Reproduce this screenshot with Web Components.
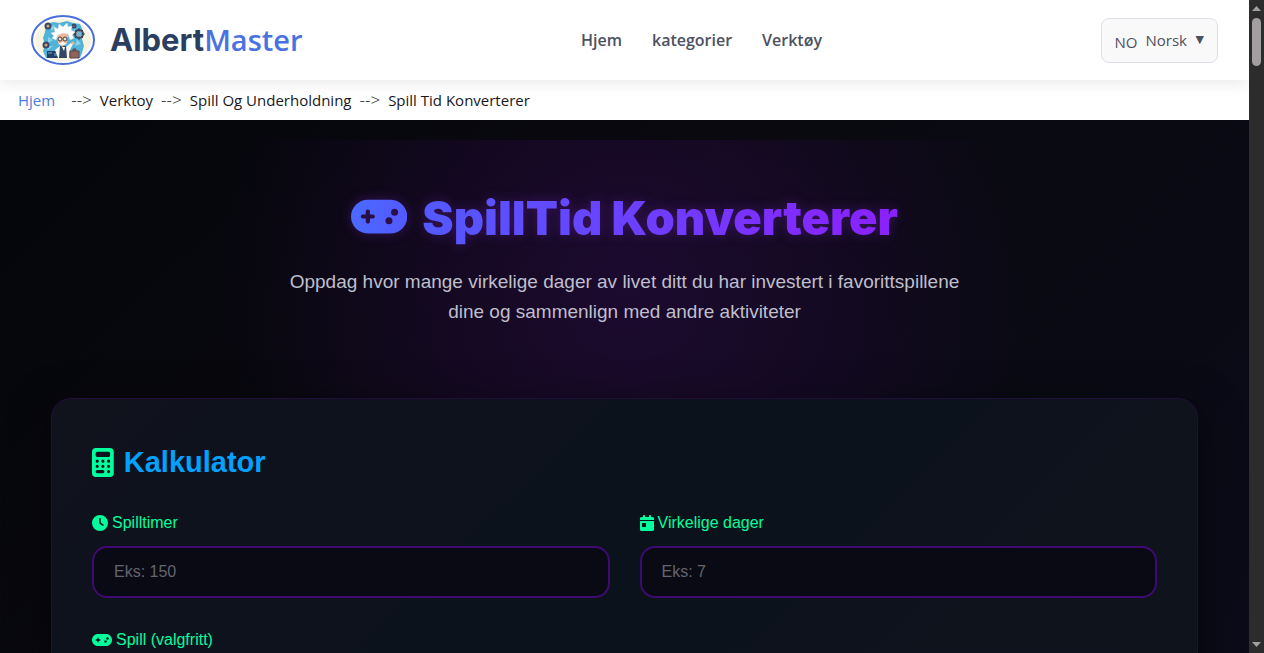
<!DOCTYPE html>
<html lang="no">
<head>
<meta charset="utf-8">
<meta name="viewport" content="width=device-width, initial-scale=1">
<title>SpillTid Konverterer - AlbertMaster</title>
<style>
  body {
    margin: 0;
    font-family: "Liberation Sans", Arial, sans-serif;
    background: #08080f;
  }
</style>
</head>
<body>
<app-shell>
  <site-header>
    <nav-link href="#hjem">Hjem</nav-link>
    <nav-link href="#kategorier">kategorier</nav-link>
    <nav-link href="#verktoy">Verktøy</nav-link>
  </site-header>
  <bread-crumbs></bread-crumbs>
  <tool-page>
    <hero-banner heading="SpillTid Konverterer">Oppdag hvor mange virkelige dager av livet ditt du har investert i favorittspillene dine og sammenlign med andre aktiviteter</hero-banner>
    <calc-card heading="Kalkulator">
      <form-field icon="clock" type="number" placeholder="Eks: 150">Spilltimer</form-field>
      <form-field icon="calendar" type="number" placeholder="Eks: 7">Virkelige dager</form-field>
      <form-field class="wide" icon="gamepad" type="text">Spill (valgfritt)</form-field>
    </calc-card>
  </tool-page>
</app-shell>

<script>
const icons = {
  gamepad: ["0 0 640 512", "M192 64C86 64 0 150 0 256S86 448 192 448l256 0c106 0 192-86 192-192s-86-192-192-192L192 64zM496 168a40 40 0 1 1 0 80 40 40 0 1 1 0-80zM392 304a40 40 0 1 1 80 0 40 40 0 1 1 -80 0zM168 200c0-13.3 10.7-24 24-24s24 10.7 24 24l0 32 32 0c13.3 0 24 10.7 24 24s-10.7 24-24 24l-32 0 0 32c0 13.3-10.7 24-24 24s-24-10.7-24-24l0-32-32 0c-13.3 0-24-10.7-24-24s10.7-24 24-24l32 0 0-32z"],
  calculator: ["0 0 384 512", "M64 0C28.7 0 0 28.7 0 64L0 448c0 35.3 28.7 64 64 64l256 0c35.3 0 64-28.7 64-64l0-384c0-35.3-28.7-64-64-64L64 0zM96 64l192 0c17.7 0 32 14.3 32 32l0 32c0 17.7-14.3 32-32 32L96 160c-17.7 0-32-14.3-32-32l0-32c0-17.7 14.3-32 32-32zM64 232a28 28 0 1 1 56 0 28 28 0 1 1 -56 0zM164 232a28 28 0 1 1 56 0 28 28 0 1 1 -56 0zM264 232a28 28 0 1 1 56 0 28 28 0 1 1 -56 0zM64 324a28 28 0 1 1 56 0 28 28 0 1 1 -56 0zM164 324a28 28 0 1 1 56 0 28 28 0 1 1 -56 0zM264 324a28 28 0 1 1 56 0 28 28 0 1 1 -56 0zM92 388l100 0a28 28 0 1 1 0 56l-100 0a28 28 0 1 1 0-56zM264 416a28 28 0 1 1 56 0 28 28 0 1 1 -56 0z"],
  clock: ["0 0 512 512", "M256 0a256 256 0 1 1 0 512A256 256 0 1 1 256 0zM232 120l0 136c0 8 4 15.5 10.7 20l96 64c11 7.4 25.9 4.4 33.3-6.7s4.4-25.9-6.7-33.3L280 243.2 280 120c0-13.3-10.7-24-24-24s-24 10.7-24 24z"],
  calendar: ["0 0 448 512", "M128 0c17.7 0 32 14.3 32 32l0 32 128 0 0-32c0-17.7 14.3-32 32-32s32 14.3 32 32l0 32 48 0c26.5 0 48 21.5 48 48l0 48L0 160l0-48C0 85.5 21.5 64 48 64l48 0 0-32c0-17.7 14.3-32 32-32zM0 192l448 0 0 272c0 26.5-21.5 48-48 48L48 512c-26.5 0-48-21.5-48-48L0 192zm80 64c-8.8 0-16 7.2-16 16l0 96c0 8.8 7.2 16 16 16l96 0c8.8 0 16-7.2 16-16l0-96c0-8.8-7.2-16-16-16l-96 0z"]
};

// height follows the font size of the parent, like an icon font
class FaIcon extends HTMLElement {
  connectedCallback() {
    const [box, path] = icons[this.getAttribute("name")];
    const fill = this.hasAttribute("gradient") ? "url(#title)" : "currentColor";
    this.attachShadow({ mode: "open" }).innerHTML = `
      <style>
        :host { display: inline-flex; }
        svg { display: block; height: 1em; }
      </style>
      <svg viewBox="${box}" aria-hidden="true">
        <defs>
          <linearGradient id="title">
            <stop offset="0" stop-color="#4a6aff"/>
            <stop offset="1" stop-color="#5359ff"/>
          </linearGradient>
        </defs>
        <path fill="${fill}" fill-rule="evenodd" d="${path}"/>
      </svg>
    `;
  }
}

class AppShell extends HTMLElement {
  connectedCallback() {
    this.attachShadow({ mode: "open" }).innerHTML = `
      <style>
        :host {
          display: grid;
          grid-template-columns: minmax(0, 1fr) 15px;
          height: 100vh;
        }
        main {
          display: flex;
          flex-direction: column;
          overflow-y: auto;
          scrollbar-width: none;
        }
      </style>
      <main><slot></slot></main>
      <scroll-rail></scroll-rail>
    `;
  }
}

class ScrollRail extends HTMLElement {
  connectedCallback() {
    this.attachShadow({ mode: "open" }).innerHTML = `
      <style>
        :host {
          display: flex;
          flex-direction: column;
          align-items: center;
          background: #2c2c2c;
        }
        svg { display: block; width: 15px; height: 18px; fill: #a39fa0; }
        .thumb { width: 9px; height: 48px; border-radius: 5px; background: #a39fa0; }
        .track { flex: 1; }
      </style>
      <svg viewBox="0 0 15 18"><path d="M7.500 6l4.500 5H3z"/></svg>
      <div class="thumb"></div>
      <div class="track"></div>
      <svg viewBox="0 0 15 18"><path d="M7.500 12l4.500-5H3z"/></svg>
    `;
  }
}

class SiteHeader extends HTMLElement {
  connectedCallback() {
    this.attachShadow({ mode: "open" }).innerHTML = `
      <style>
        :host {
          display: flex;
          flex: none;
          align-items: center;
          justify-content: space-between;
          box-sizing: border-box;
          height: 80px;
          padding: 0 31px;
          background: #fff;
          box-shadow: 0 2px 15px rgba(0, 0, 0, 0.1);
          position: relative;
          font-family: "Open Sans", sans-serif;
        }
        .brand {
          display: flex;
          align-items: center;
          gap: 15px;
          text-decoration: none;
          white-space: nowrap;
        }
        .name { font: 700 31px/44px Inter, sans-serif; color: #2a3f5f; }
        .name span { font: 600 29px/44px "Open Sans", sans-serif; color: #4a72e0; }
        nav { display: flex; gap: 30px; }
      </style>
      <a class="brand" href="#">
        <brand-logo></brand-logo>
        <div class="name">Albert<span>Master</span></div>
      </a>
      <nav><slot></slot></nav>
      <language-picker></language-picker>
    `;
  }
}

class BrandLogo extends HTMLElement {
  connectedCallback() {
    this.attachShadow({ mode: "open" }).innerHTML = `
      <style>
        :host { display: block; }
        svg { display: block; width: 64px; height: 50px; }
      </style>
      <svg viewBox="0 0 64 50" aria-hidden="true">
        <ellipse cx="32" cy="25" rx="31" ry="24" fill="#fff" stroke="#4a6fdc" stroke-width="2"/>
        <ellipse cx="32" cy="25" rx="28" ry="21" fill="#f8f3df"/>
        <path d="M15 10l7-3 6 1 8-2 6 2 7 1 3 7-1 8 2 7-2 7-2 5H15l-3-7 2-6-2-7 2-6z" fill="#4fb3da"/>
        <path d="M18 12l6-2-3 6zM43 14l6 3-5 4zM17 22l5 3-5 3zM46 24l4 5-6 2zM22 31l-5 4-2-4z" fill="#8dd3ea"/>
        <g fill="#d9a273" stroke="#384766" stroke-width="2">
          <circle cx="17" cy="11" r="2.500"/>
          <circle cx="43" cy="11" r="1.500"/>
          <circle cx="48" cy="19" r="4"/>
          <circle cx="15" cy="30" r="2.500"/>
        </g>
        <path d="M48 13v12M42 19h12M44 15l8 8M52 15l-8 8" stroke="#384766" stroke-width="1"/>
        <circle cx="48" cy="19" r="2.500" fill="#72b5d5"/>
        <path d="M16 36h11v7H16z" fill="#243f65"/>
        <path d="M17 37h4v2h-4zM23 38h3v3h-3z" fill="#477aa0"/>
        <path d="M39 36h9v7h-9zM42 36v-2h3v2" fill="#8e6458" stroke="#5b464e"/>
        <path d="M24 35l5-4 6 1 5-4 2 1-4 8v6H27z" fill="#f6f5ef"/>
        <path d="M29 31h6l1 12h-8z" fill="#334765"/>
        <path d="M31 32l2 4 1-4z" fill="#fff"/>
        <path d="M26 20c2-4 9-4 11 0l-1 8-5 4-4-4z" fill="#efb894"/>
        <path d="M25 25l-4-2 2-2-3-3 4-1-1-5 4 2 1-5 4 3 4-4 1 4 4-1-1 4 4 2-3 3 2 3-4 2-2-6-5-1-5 2z" fill="#fff" stroke="#d9e2e7" stroke-width=".500"/>
        <circle cx="29" cy="24" r="2" fill="#f6ddca" stroke="#384050"/>
        <circle cx="34" cy="24" r="2" fill="#f6ddca" stroke="#384050"/>
        <path d="M27 29l5-2 4 2-4 1z" fill="#fff"/>
        <circle cx="42" cy="28" r="1.500" fill="#efb894"/>
      </svg>
    `;
  }
}

class NavLink extends HTMLElement {
  connectedCallback() {
    this.attachShadow({ mode: "open" }).innerHTML = `
      <style>
        :host { display: block; }
        a { font-size: 16px; line-height: 24px; font-weight: 600; color: #4d515f; text-decoration: none; }
      </style>
      <a href="${this.getAttribute("href")}"><slot></slot></a>
    `;
  }
}

class LanguagePicker extends HTMLElement {
  connectedCallback() {
    this.attachShadow({ mode: "open" }).innerHTML = `
      <style>
        :host { display: block; }
        label {
          display: flex;
          align-items: center;
          gap: 8px;
          box-sizing: border-box;
          height: 45px;
          padding: 0 13px;
          border: 1px solid #dedee6;
          border-radius: 8px;
          background: #f9f9f9;
          color: #4d515f;
          font-size: 15px;
          line-height: 20px;
        }
        .code { padding-top: 4px; }
        select {
          appearance: none;
          border: 0;
          padding: 0;
          background: none;
          color: inherit;
          font: inherit;
        }
        .arrow { font: 11px/20px "DejaVu Sans", sans-serif; }
      </style>
      <label>
        <span class="code">NO</span>
        <select aria-label="Språk"><option>Norsk</option></select>
        <span class="arrow">▼</span>
      </label>
    `;
  }
}

class BreadCrumbs extends HTMLElement {
  connectedCallback() {
    const trail = ["Verktoy", "Spill Og Underholdning", "Spill Tid Konverterer"];
    this.attachShadow({ mode: "open" }).innerHTML = `
      <style>
        :host {
          display: block;
          flex: none;
          background: #fff;
          font: 15px/20px "Open Sans", sans-serif;
        }
        ol {
          display: flex;
          list-style: none;
          margin: 0;
          padding: 10px 18px;
          white-space: nowrap;
        }
        li { color: #16181d; font-weight: 500; }
        li + li::before {
          content: "-->";
          margin: 0 8px;
          font-size: 17px;
          font-weight: 300;
        }
        a { color: #4a7be0; font-weight: 400; text-decoration: none; margin-right: 8px; }
      </style>
      <ol>
        <li><a href="#hjem">Hjem</a></li>
        ${trail.map(text => `<li>${text}</li>`).join("")}
      </ol>
    `;
  }
}

class ToolPage extends HTMLElement {
  connectedCallback() {
    this.attachShadow({ mode: "open" }).innerHTML = `
      <style>
        :host {
          display: block;
          flex: none;
          padding: 20px;
          background: linear-gradient(135deg, #05050c, #09090f 40%, #0b0b1a);
        }
      </style>
      <slot></slot>
    `;
  }
}

class HeroBanner extends HTMLElement {
  connectedCallback() {
    this.attachShadow({ mode: "open" }).innerHTML = `
      <style>
        :host {
          display: block;
          padding: 48px 20px 71px;
          text-align: center;
          background: radial-gradient(ellipse 400px 420px at 50% 55%, rgba(106, 13, 173, 0.2), rgba(106, 13, 173, 0.14) 35%, transparent);
        }
        h1 {
          display: inline-flex;
          align-items: center;
          gap: 15px;
          margin: 0 0 19px;
          font: 900 47px/60px Inter, "Liberation Sans", sans-serif;
          filter: drop-shadow(0 0 6px rgba(138, 43, 226, 0.3));
        }
        h1 fa-icon { font-size: 45px; padding-bottom: 4px; }
        h1 span {
          background: linear-gradient(90deg, #5359ff, #8b20ff);
          -webkit-background-clip: text;
          background-clip: text;
          color: transparent;
        }
        p {
          max-width: 700px;
          margin: 0 auto;
          font-size: 19px;
          line-height: 30px;
          color: #bfbfcc;
        }
      </style>
      <h1><fa-icon name="gamepad" gradient></fa-icon><span>${this.getAttribute("heading")}</span></h1>
      <p><slot></slot></p>
    `;
  }
}

class CalcCard extends HTMLElement {
  connectedCallback() {
    this.attachShadow({ mode: "open" }).innerHTML = `
      <style>
        :host {
          display: block;
          margin: 0 31px;
          padding: 40px;
          border: 1px solid #220e3c;
          border-radius: 20px;
          background: linear-gradient(135deg, #10121c, #0b121c 50%, #10131c);
          box-shadow: 0 10px 40px rgba(0, 0, 0, 0.5);
        }
        h2 {
          display: flex;
          align-items: center;
          gap: 10px;
          margin: 0 0 26px;
          font-size: 29px;
          line-height: 46px;
          color: #00a2ff;
        }
        fa-icon { color: #00ff9d; }
        form { display: grid; grid-template-columns: 1fr 1fr; gap: 30px; }
        ::slotted(.wide) { grid-column: 1 / -1; }
      </style>
      <h2><fa-icon name="calculator"></fa-icon>${this.getAttribute("heading")}</h2>
      <form><slot></slot></form>
    `;
  }
}

class FormField extends HTMLElement {
  connectedCallback() {
    const get = name => this.getAttribute(name) || "";
    this.attachShadow({ mode: "open" }).innerHTML = `
      <style>
        :host { display: block; }
        label {
          display: flex;
          align-items: center;
          gap: 4px;
          margin-bottom: 11px;
          font-size: 16px;
          line-height: 24px;
          color: #00ff9d;
        }
        input {
          display: block;
          box-sizing: border-box;
          width: 100%;
          height: 52px;
          padding: 0 20px;
          border: 2px solid #3d0b72;
          border-radius: 15px;
          background: #0a0a14;
          color: #fff;
          font: 16px "Liberation Sans", Arial, sans-serif;
        }
        input::placeholder { color: #646470; }
      </style>
      <label for="field"><fa-icon name="${get("icon")}"></fa-icon><slot></slot></label>
      <input id="field" type="${get("type")}" placeholder="${get("placeholder")}">
    `;
  }
}

customElements.define("fa-icon", FaIcon);
customElements.define("scroll-rail", ScrollRail);
customElements.define("app-shell", AppShell);
customElements.define("brand-logo", BrandLogo);
customElements.define("nav-link", NavLink);
customElements.define("language-picker", LanguagePicker);
customElements.define("site-header", SiteHeader);
customElements.define("bread-crumbs", BreadCrumbs);
customElements.define("tool-page", ToolPage);
customElements.define("hero-banner", HeroBanner);
customElements.define("calc-card", CalcCard);
customElements.define("form-field", FormField);
</script>
</body>
</html>
